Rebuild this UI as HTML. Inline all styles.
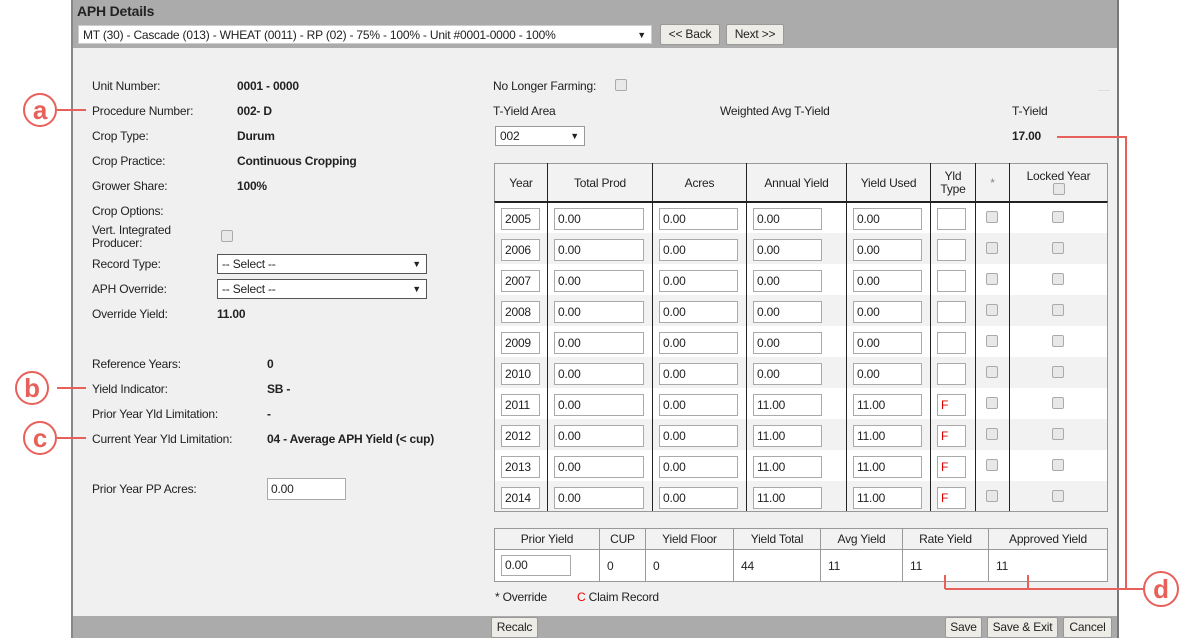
<!DOCTYPE html>
<html><head><style>
*{box-sizing:border-box;margin:0;padding:0}
body{width:1191px;height:638px;background:#fff;font-family:"Liberation Sans",sans-serif;font-size:12px;color:#222;position:relative;overflow:hidden;letter-spacing:-0.2px}
.a{position:absolute;white-space:nowrap}
.frame{position:absolute;left:71px;top:0;width:1048px;height:638px;background:#f0f0f0;border-left:2px solid #888;border-right:2px solid #777}
.hdr{position:absolute;left:71px;top:0;width:1048px;height:48px;background:#ababab;border-left:2px solid #888;border-right:2px solid #777}
.ftr{position:absolute;left:71px;top:616px;width:1048px;height:22px;background:#ababab;border-left:2px solid #888;border-right:2px solid #777}
.btn{position:absolute;background:#eeece6;border:1px solid #999;border-radius:2px;font-size:12px;text-align:center;line-height:19px;height:21px}
.inp{position:absolute;background:#fff;border:1px solid #aaa;height:22px;padding-left:3px;line-height:20px;font-size:12px}
.sel{position:absolute;background:#fff;border:1px solid #555;height:20px;padding-left:4px;line-height:18px}
.sel:after{content:"▼";position:absolute;right:5px;top:0;font-size:9px}
.cb{position:absolute;width:12px;height:12px;border:1px solid #aaa;border-radius:2px;background:#e8e8e8}
.b{font-weight:bold}
table{border-collapse:collapse;position:absolute}
td{border:1px solid #999;font-size:12px}
</style></head><body>
<div class="frame"></div>
<div class="hdr"></div>
<div class="ftr"></div>
<div class="a b" style="left:77px;top:3px;font-size:14px">APH Details</div>
<div class="sel" style="left:78px;top:25px;width:574px;height:19px;border-color:#ccc">MT (30) - Cascade (013) - WHEAT (0011) - RP (02) - 75% - 100% - Unit #0001-0000 - 100%</div>
<div class="btn" style="left:660px;top:24px;width:60px">&lt;&lt; Back</div>
<div class="btn" style="left:726px;top:24px;width:58px">Next &gt;&gt;</div>

<div class="a" style="left:92px;top:79px">Unit Number:</div><div class="a b" style="left:237px;top:79px">0001 - 0000</div>
<div class="a" style="left:92px;top:104px">Procedure Number:</div><div class="a b" style="left:237px;top:104px">002- D</div>
<div class="a" style="left:92px;top:129px">Crop Type:</div><div class="a b" style="left:237px;top:129px">Durum</div>
<div class="a" style="left:92px;top:154px">Crop Practice:</div><div class="a b" style="left:237px;top:154px">Continuous Cropping</div>
<div class="a" style="left:92px;top:179px">Grower Share:</div><div class="a b" style="left:237px;top:179px">100%</div>
<div class="a" style="left:92px;top:204px">Crop Options:</div>
<div class="a" style="left:92px;top:224px;line-height:13px">Vert. Integrated<br>Producer:</div><div class="cb" style="left:221px;top:230px"></div>
<div class="a" style="left:92px;top:257px">Record Type:</div><div class="sel" style="left:217px;top:254px;width:210px">-- Select --</div>
<div class="a" style="left:92px;top:282px">APH Override:</div><div class="sel" style="left:217px;top:279px;width:210px">-- Select --</div>
<div class="a" style="left:92px;top:307px">Override Yield:</div><div class="a b" style="left:217px;top:307px">11.00</div>
<div class="a" style="left:92px;top:357px">Reference Years:</div><div class="a b" style="left:267px;top:357px">0</div>
<div class="a" style="left:92px;top:382px">Yield Indicator:</div><div class="a b" style="left:267px;top:382px">SB -</div>
<div class="a" style="left:92px;top:407px">Prior Year Yld Limitation:</div><div class="a b" style="left:267px;top:407px">-</div>
<div class="a" style="left:92px;top:432px">Current Year Yld Limitation:</div><div class="a b" style="left:267px;top:432px">04 - Average APH Yield (&lt; cup)</div>
<div class="a" style="left:92px;top:482px">Prior Year PP Acres:</div><div class="inp" style="left:267px;top:478px;width:79px">0.00</div>

<div class="a" style="left:493px;top:79px">No Longer Farming:</div><div class="cb" style="left:615px;top:79px"></div>
<div class="a" style="left:1098px;top:90px;width:12px;border-top:1px solid #ddd"></div>
<div class="a" style="left:493px;top:104px">T-Yield Area</div>
<div class="a" style="left:720px;top:104px">Weighted Avg T-Yield</div>
<div class="a" style="left:1012px;top:104px">T-Yield</div>
<div class="sel" style="left:495px;top:126px;width:90px;border-color:#999">002</div>
<div class="a b" style="left:1012px;top:129px">17.00</div>

<table style="left:494px;top:163px;width:614px;background:#fff">
<tr style="background:#f2f2f2;height:39px;text-align:center">
<td style="width:53px">Year</td><td style="width:105px">Total Prod</td><td style="width:94px">Acres</td><td style="width:100px">Annual Yield</td><td style="width:84px">Yield Used</td><td style="width:45px;line-height:13px">Yld<br>Type</td><td style="width:34px;color:#888">*</td><td style="line-height:14px">Locked Year<br><span style="display:inline-block;width:12px;height:12px;border:1px solid #aaa;border-radius:2px;background:#e8e8e8"></span></td></tr>
</table>
<div class="a" style="left:494px;top:201px;width:614px;height:311px;background:#fff"></div>
<div id="rows"></div>
<div class="a" style="left:494px;top:201px;width:614px;height:311px;border:1px solid #999;border-top:2px solid #222"></div>
<script>
var h='';var ys=[2005,2006,2007,2008,2009,2010,2011,2012,2013,2014];
for(var i=0;i<10;i++){var y=202+i*31;var v=i>=6?'11.00':'0.00';
if(i%2)h+='<div class="a" style="left:495px;top:'+y+'px;width:612px;height:31px;background:#f2f2f2"></div>';
h+='<div class="inp" style="left:501px;top:'+(y+6)+'px;width:39px">'+ys[i]+'</div>';
h+='<div class="inp" style="left:554px;top:'+(y+6)+'px;width:90px">0.00</div>';
h+='<div class="inp" style="left:659px;top:'+(y+6)+'px;width:79px">0.00</div>';
h+='<div class="inp" style="left:753px;top:'+(y+6)+'px;width:69px">'+v+'</div>';
h+='<div class="inp" style="left:853px;top:'+(y+6)+'px;width:69px">'+v+'</div>';
h+='<div class="inp" style="left:937px;top:'+(y+6)+'px;width:29px;color:#d00">'+(i>=6?'F':'')+'</div>';
h+='<div class="cb" style="left:986px;top:'+(y+9)+'px"></div>';
h+='<div class="cb" style="left:1052px;top:'+(y+9)+'px"></div>';}
var c=[547,652,746,846,930,975,1009];
for(var j=0;j<c.length;j++)h+='<div class="a" style="left:'+c[j]+'px;top:163px;width:1px;height:349px;background:#222"></div>';
document.getElementById('rows').innerHTML=h;
</script>

<table style="left:494px;top:528px;width:614px;text-align:left">
<tr style="background:#f2f2f2;height:21px;text-align:center"><td style="width:105px">Prior Yield</td><td style="width:46px">CUP</td><td style="width:88px">Yield Floor</td><td style="width:87px">Yield Total</td><td style="width:82px">Avg Yield</td><td style="width:86px">Rate Yield</td><td>Approved Yield</td></tr>
<tr style="background:#fff;height:32px"><td style="padding-left:6px"><span style="display:inline-block;width:70px;height:21px;border:1px solid #aaa;line-height:19px;padding-left:3px">0.00</span></td><td style="padding-left:7px">0</td><td style="padding-left:7px">0</td><td style="padding-left:7px">44</td><td style="padding-left:7px">11</td><td style="padding-left:7px">11</td><td style="padding-left:7px">11</td></tr>
</table>
<div class="a" style="left:495px;top:590px">* Override</div>
<div class="a" style="left:577px;top:590px"><span style="color:#e00">C</span> Claim Record</div>

<div class="btn" style="left:491px;top:617px;width:47px">Recalc</div>
<div class="btn" style="left:945px;top:617px;width:37px">Save</div>
<div class="btn" style="left:987px;top:617px;width:71px">Save &amp; Exit</div>
<div class="btn" style="left:1063px;top:617px;width:49px">Cancel</div>

<svg class="a" style="left:0;top:0" width="1191" height="638">
<g stroke="#e8605a" stroke-width="2" fill="none">
<line x1="57" y1="110" x2="86" y2="110"/><circle cx="40" cy="110" r="16" fill="#fff"/>
<line x1="57" y1="388" x2="86" y2="388"/><circle cx="32" cy="388" r="16" fill="#fff"/>
<line x1="57" y1="438" x2="86" y2="438"/><circle cx="40" cy="438" r="16" fill="#fff"/>
<polyline points="1057,137 1126,137 1126,589"/>
<line x1="945" y1="589" x2="1144" y2="589"/>
<line x1="945" y1="575" x2="945" y2="589"/><line x1="1028" y1="575" x2="1028" y2="589"/>
<circle cx="1161" cy="589" r="17" fill="#fff"/>
</g>
<g fill="#e8605a" font-family="Liberation Sans" font-size="26" font-weight="bold" text-anchor="middle">
<text x="40" y="119">a</text><text x="32" y="397">b</text><text x="40" y="447">c</text><text x="1161" y="598">d</text>
</g></svg>
</body></html>
